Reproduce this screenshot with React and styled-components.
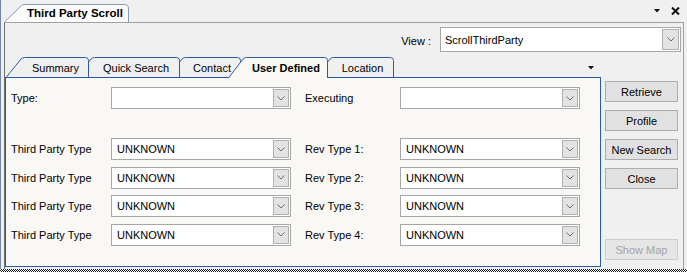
import React from 'react';
import styled, { createGlobalStyle } from 'styled-components';

const Global = createGlobalStyle`
  html, body { margin: 0; padding: 0; background: #f0f0f0; }
  body { font-family: "Liberation Sans", Arial, sans-serif; font-size: 11px; color: #000; }
  * { box-sizing: border-box; }
`;

const Window = styled.div`
  width: 687px;
  height: 272px;
  display: flex;
  flex-direction: column;
  background: #f0f0f0;
  overflow: hidden;
`;

const Frame = styled.div`
  flex: 1;
  display: flex;
  flex-direction: column;
  border-left: 1px solid #7189a6;
  padding: 0 3px;
  min-height: 0;
`;

const FocusLine = styled.div`
  height: 3px;
  flex: none;
  background: conic-gradient(#1a1a1a 25%, #ffffff 0 50%, #1a1a1a 0 75%, #ffffff 0) 0 0 / 2px 2px;
`;

const TitleBar = styled.div`
  height: 23px;
  flex: none;
  display: flex;
  align-items: flex-end;
  border-bottom: 1px solid #a0a0a0;
`;

const TitleTab = styled.div`
  position: relative;
  flex: none;
  width: 125px;
  height: 18px;
  display: flex;
  align-items: center;
`;

const TitleText = styled.span`
  position: relative;
  margin-left: 23px;
  font-weight: bold;
  font-size: 11.5px;
  white-space: nowrap;
`;

const ShapeSvg = styled.svg`
  position: absolute;
  left: 0;
  top: 0;
  overflow: visible;
`;

const TitleIcons = styled.div`
  margin-left: auto;
  align-self: center;
  display: flex;
  align-items: center;
  gap: 11px;
  padding-right: 4px;
  margin-bottom: 1px;
`;

const Body = styled.div`
  flex: 1;
  display: flex;
  flex-direction: column;
  border-left: 1px solid #6e6e6e;
  border-right: 1px solid #a0a0a0;
  padding-bottom: 2px;
  min-height: 0;
`;

const ViewRow = styled.div`
  height: 34px;
  flex: none;
  display: flex;
  justify-content: flex-end;
  align-items: flex-start;
  padding: 4px 2px 0 0;
  gap: 9px;
`;

const ViewLabel = styled.div`
  margin-top: 8px;
`;

const Combo = styled.div`
  width: ${p => p.$w || 180}px;
  height: ${p => p.$h || 22}px;
  border: 1px solid #a7a7a7;
  background: #fff;
  display: flex;
  align-items: center;
  padding: 1px;
`;

const ComboText = styled.div`
  flex: 1;
  padding-left: ${p => p.$pad || 4}px;
  white-space: nowrap;
`;

const DropBtn = styled.div`
  width: ${p => p.$w || 16}px;
  height: 100%;
  background: #e3e3e3;
  border: 1px solid #b0b0b0;
  display: flex;
  align-items: center;
  justify-content: center;
`;

const Main = styled.div`
  flex: 1;
  display: flex;
  min-height: 0;
`;

const LeftCol = styled.div`
  width: 596px;
  display: flex;
  flex-direction: column;
`;

const TabStrip = styled.div`
  height: 20px;
  flex: none;
  display: flex;
  padding-left: 1px;
  position: relative;
  z-index: 1;
`;

const Tab = styled.div`
  position: relative;
  width: ${p => p.$w}px;
  height: 20px;
  margin-left: ${p => (p.$first ? 0 : -13)}px;
  z-index: ${p => p.$z};
  padding-left: 16px;
  display: flex;
  align-items: center;
  justify-content: center;
  font-weight: ${p => (p.$active ? 'bold' : 'normal')};
  padding-top: 2px;
  span { position: relative; }
`;

const StripArrow = styled.div`
  margin-left: auto;
  padding-right: 7px;
  align-self: center;
  display: flex;
  margin-top: 2px;
`;

const Panel = styled.div`
  flex: 1;
  border: 1px solid #2b5aa6;
  background: #f9f8f5;
  padding: 9px 0 0 5px;
  display: flex;
  flex-direction: column;
  gap: 6.5px;
`;

const FormRow = styled.div`
  display: grid;
  grid-template-columns: 100px 180px 109px 180px;
  align-items: center;
  margin-bottom: ${p => p.$after || 0}px;
`;

const Label = styled.div`
  padding-left: ${p => p.$indent || 0}px;
  white-space: nowrap;
`;

const RightCol = styled.div`
  width: 82px;
  display: flex;
  flex-direction: column;
  gap: 8px;
  padding: 24px 5px 7px 4px;
`;

const Button = styled.div`
  height: 21px;
  border: 1px solid ${p => (p.$disabled ? '#cccccc' : '#adadad')};
  background: ${p => (p.$disabled ? '#e6e6e6' : '#e1e1e1')};
  color: ${p => (p.$disabled ? '#a2a2a2' : '#000')};
  display: flex;
  align-items: center;
  justify-content: center;
  margin-top: ${p => (p.$bottom ? 'auto' : '0')};
  white-space: nowrap;
`;

const Chevron = () => (
  <svg width="8" height="5" viewBox="0 0 8 5">
    <polyline points="0.5,0.5 4,4 7.5,0.5" fill="none" stroke="#6b6b6b" strokeWidth="1" />
  </svg>
);

const SmallDown = ({ w = 6 }) => (
  <svg width={w} height="4" viewBox={`0 0 ${w} 4`}>
    <polygon points={`0,0 ${w},0 ${w / 2},3.5`} fill="#111" />
  </svg>
);

const CloseX = () => (
  <svg width="9" height="8" viewBox="0 0 9 8">
    <path d="M1 0.5 L8 7.5 M8 0.5 L1 7.5" stroke="#111" strokeWidth="2" />
  </svg>
);

const tabPath = (w, h) =>
  `M0.5,${h} L15,2 Q16.5,0.5 18.5,0.5 L${w - 3.5},0.5 Q${w - 0.5},0.5 ${w - 0.5},3.5 L${w - 0.5},${h}`;

const ComboBox = ({ value, w, h, btnW, pad }) => (
  <Combo $w={w} $h={h}>
    <ComboText $pad={pad}>{value}</ComboText>
    <DropBtn $w={btnW}><Chevron /></DropBtn>
  </Combo>
);

const tabs = [
  { label: 'Summary', w: 83, z: 5 },
  { label: 'Quick Search', w: 104, z: 4 },
  { label: 'Contact', w: 74, z: 3 },
  { label: 'User Defined', w: 100, z: 10, active: true },
  { label: 'Location', w: 79, z: 1 },
];

const rows = [1, 2, 3, 4];

export default function App() {
  return (
    <Window>
      <Global />
      <Frame>
        <TitleBar>
          <TitleTab>
            <ShapeSvg width="125" height="18">
              <path
                d="M0.5,18 L17.5,1.5 Q18.5,0.5 20,0.5 L121,0.5 Q124.5,0.5 124.5,4 L124.5,18"
                fill="#fcfcfc"
                stroke="#7f9bbb"
              />
            </ShapeSvg>
            <TitleText>Third Party Scroll</TitleText>
          </TitleTab>
          <TitleIcons>
            <SmallDown w={6} />
            <CloseX />
          </TitleIcons>
        </TitleBar>
        <Body>
          <ViewRow>
            <ViewLabel>View :</ViewLabel>
            <ComboBox value="ScrollThirdParty" w={241} h={25} btnW={17} pad={3} />
          </ViewRow>
          <Main>
            <LeftCol>
              <TabStrip>
                {tabs.map((t, i) => (
                  <Tab key={t.label} $w={t.w} $z={t.z} $first={i === 0} $active={t.active}>
                    <ShapeSvg width={t.w} height={t.active ? 21 : 20}>
                      <path
                        d={tabPath(t.w, t.active ? 21 : 20)}
                        fill={t.active ? '#f9f8f5' : '#f0f0f0'}
                        stroke="#2b5aa6"
                      />
                    </ShapeSvg>
                    <span>{t.label}</span>
                  </Tab>
                ))}
                <StripArrow><SmallDown w={6} /></StripArrow>
              </TabStrip>
              <Panel>
                <FormRow $after={22.5}>
                  <Label>Type:</Label>
                  <ComboBox value="" />
                  <Label $indent={14}>Executing</Label>
                  <ComboBox value="" />
                </FormRow>
                {rows.map(n => (
                  <FormRow key={n}>
                    <Label>Third Party Type</Label>
                    <ComboBox value="UNKNOWN" />
                    <Label $indent={14}>Rev Type {n}:</Label>
                    <ComboBox value="UNKNOWN" />
                  </FormRow>
                ))}
              </Panel>
            </LeftCol>
            <RightCol>
              <Button>Retrieve</Button>
              <Button>Profile</Button>
              <Button>New Search</Button>
              <Button>Close</Button>
              <Button $disabled $bottom>Show Map</Button>
            </RightCol>
          </Main>
        </Body>
      </Frame>
      <FocusLine />
    </Window>
  );
}
